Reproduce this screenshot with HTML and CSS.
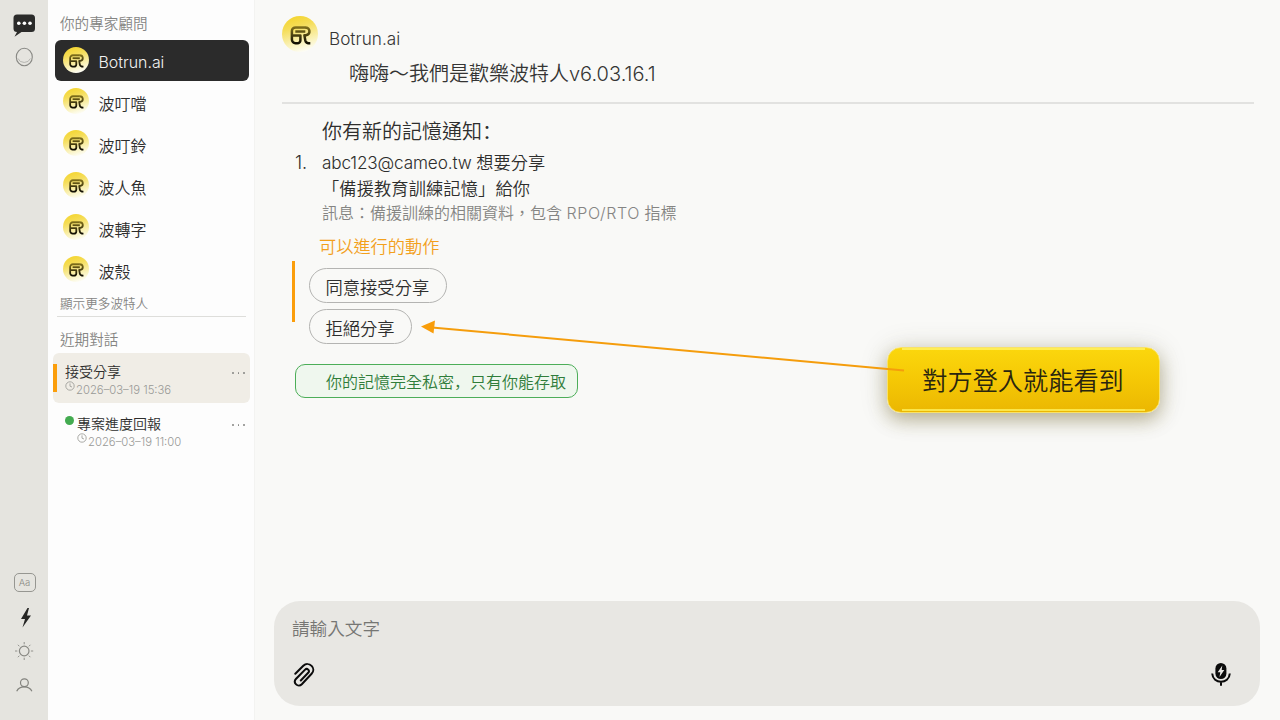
FILE: index.html
```html
<!DOCTYPE html>
<html lang="zh-Hant">
<head>
<meta charset="utf-8">
<title>Botrun.ai</title>
<link rel="stylesheet" href="styles.css">
</head>
<body>
<svg class="defs" width="0" height="0" aria-hidden="true">
  <defs>
    <linearGradient id="sun" x1="0.3" y1="0" x2="0.6" y2="1">
      <stop offset="0" stop-color="#f4d52f"/>
      <stop offset="0.3" stop-color="#f5dd58"/>
      <stop offset="0.75" stop-color="#faf3bf"/>
      <stop offset="1" stop-color="#fdfdf8"/>
    </linearGradient>
    <linearGradient id="ink" gradientUnits="userSpaceOnUse" x1="0" y1="10" x2="0" y2="28">
      <stop offset="0" stop-color="#85741c"/>
      <stop offset="0.55" stop-color="#453c10"/>
      <stop offset="1" stop-color="#0c0a02"/>
    </linearGradient>
    <symbol id="logo" viewBox="0 0 36 36">
      <circle cx="18" cy="18" r="18" fill="url(#sun)"/>
      <g fill="none" stroke="url(#ink)" stroke-width="2.5" stroke-linejoin="round">
        <path d="M23.300 11.400H13.600a3.700 3.700 0 0 0-3.700 3.700V23.600a3.600 3.600 0 0 0 3.600 3.600h1.900a3 3 0 0 0 3-3V19.600H10"/>
        <path d="M13.300 15.500L23.300 15.600"/>
        <path d="M23 11.400c5.500 0 5.900 6.800 1 7.900H22.400L23.300 24.400C23.700 26.400 24.700 27.300 28.300 27.300"/>
      </g>
    </symbol>
    <symbol id="clock" viewBox="0 0 10 10">
      <circle cx="5" cy="5" r="4.200" fill="none" stroke="#a0a09c" stroke-width="0.900"/>
      <path d="M5 2.400V5.200L7 6" fill="none" stroke="#a0a09c" stroke-width="0.900"/>
    </symbol>
  </defs>
</svg>
<div class="app">
  <nav class="rail">
    <div class="rail-top">
      <svg class="ico-chat" width="24" height="25" viewBox="0 0 24 25"><path d="M5 1.500H19.500a3.500 3.500 0 0 1 3.500 3.500V15.500A3.500 3.500 0 0 1 19.500 19H9.500L2.500 23.800 5 19A3.500 3.500 0 0 1 1.500 15.500V5A3.500 3.500 0 0 1 5 1.500Z" fill="#2b2b2a"/><g fill="#fff"><circle cx="6.800" cy="10.200" r="1.800"/><circle cx="12.400" cy="10.200" r="1.800"/><circle cx="18" cy="10.200" r="1.800"/></g></svg>
      <svg class="ico-ring" width="20" height="20" viewBox="0 0 20 20" fill="none"><ellipse cx="10.300" cy="10" rx="8" ry="8.800" stroke="#888884" stroke-width="1.100"/><path d="M4 11.500a6.600 6 0 0 0 12.400 0" stroke="#b0b0ab" stroke-width="0.900"/></svg>
    </div>
    <div class="rail-bottom">
      <span class="ico-font">Aa</span>
      <svg class="ico-bolt" width="16" height="22" viewBox="0 0 16 22"><path d="M9.500 1L3 12H7L4.500 20.500 13 8.500H9L11 1Z" fill="#262624"/></svg>
      <svg class="ico-sun" width="20" height="20" viewBox="0 0 20 20" fill="none" stroke="#888883"><circle cx="10.200" cy="10" r="4.800" stroke-width="1.200"/><path stroke-width="0.900" d="M10.200 1V3.300M10.200 16.700V19M1 10H3.300M16.900 10H19.200M3.900 3.800L5.400 5.300M14.900 14.700L16.400 16.200M16.400 3.800L14.900 5.300M5.400 14.700L3.900 16.200"/></svg>
      <svg class="ico-user" width="18" height="16" viewBox="0 0 18 16" fill="none" stroke="#82827d" stroke-width="1.200"><circle cx="9.400" cy="5.700" r="3.900"/><path d="M1.700 14.200C4.500 8.500 14 8.500 16.900 14.200"/></svg>
    </div>
  </nav>
  <aside class="sidebar">
    <h2 class="side-title">你的專家顧問</h2>
    <ul class="bots">
      <li class="bot active"><svg class="bot-logo"><use href="#logo"/></svg><span>Botrun.ai</span></li>
      <li class="bot"><svg class="bot-logo"><use href="#logo"/></svg><span>波叮噹</span></li>
      <li class="bot"><svg class="bot-logo"><use href="#logo"/></svg><span>波叮鈴</span></li>
      <li class="bot"><svg class="bot-logo"><use href="#logo"/></svg><span>波人魚</span></li>
      <li class="bot"><svg class="bot-logo"><use href="#logo"/></svg><span>波轉字</span></li>
      <li class="bot"><svg class="bot-logo"><use href="#logo"/></svg><span>波殼</span></li>
    </ul>
    <div class="more">顯示更多波特人</div>
    <h2 class="side-title recent">近期對話</h2>
    <div class="chat selected">
      <div class="chat-body">
        <div class="chat-name">接受分享</div>
        <div class="chat-date"><svg><use href="#clock"/></svg><span>2026–03–19 15:36</span></div>
      </div>
      <div class="dots"><i></i><i></i><i></i></div>
    </div>
    <div class="chat unread">
      <i class="status"></i>
      <div class="chat-body">
        <div class="chat-name">專案進度回報</div>
        <div class="chat-date"><svg><use href="#clock"/></svg><span>2026–03–19 11:00</span></div>
      </div>
      <div class="dots"><i></i><i></i><i></i></div>
    </div>
  </aside>
  <main class="main">
    <header class="head">
      <div class="who"><svg class="head-logo"><use href="#logo"/></svg><span>Botrun.ai</span></div>
      <div class="greeting">嗨嗨～我們是歡樂波特人v6.03.16.1</div>
    </header>
    <section class="notice">
      <h1 class="notice-title">你有新的記憶通知<span class="sc" lang="zh-Hans">：</span></h1>
      <div class="item">
        <span class="num">1.</span>
        <div class="item-body">
          <p><span class="mail">abc123@cameo.tw</span> 想要分享</p>
          <p class="topic">「備援教育訓練記憶」給你</p>
          <p class="msg">訊息：備援訓練的相關資料，包含 <span class="rpo">RPO/RTO</span> 指標</p>
        </div>
      </div>
      <div class="actions-title">可以進行的動作</div>
      <div class="actions">
        <button class="pill">同意接受分享</button>
        <button class="pill">拒絕分享</button>
      </div>
      <div class="private">你的記憶完全私密<span class="sc" lang="zh-Hans">，</span>只有你能存取</div>
    </section>
    <div class="composer">
      <div class="placeholder">請輸入文字</div>
      <div class="tools">
        <svg width="24" height="26" viewBox="0 0 24 26" fill="none" stroke="#0b0b0b" stroke-width="2" stroke-linecap="round" stroke-linejoin="round"><path d="M3.300 11.800L11.300 3.800C13.700 1.500 17.300 1.600 19.600 3.900S21.800 9.500 19.600 11.800L9.800 22.300C8.100 24 5.700 24 4.100 22.400S2.500 18.500 4.100 16.800L13.100 7.600C14 6.700 15.300 6.700 16.200 7.600S17 9.900 16.200 10.800L8.800 18.500"/></svg>
        <svg width="22" height="26" viewBox="0 0 22 26"><rect x="5.400" y="1" width="11" height="16" rx="5.500" fill="#0b0b0b"/><path d="M12.300 3.400L7.700 10.200H10.300L9.500 14.900 14.300 8.100H11.700Z" fill="#e9e8e4"/><path d="M2.200 11.500C2.800 22.500 19.200 22.500 19.800 11.500M11 19.700V23.700" fill="none" stroke="#0b0b0b" stroke-width="2"/></svg>
      </div>
    </div>
  </main>
  <div class="callout">對方登入就能看到</div>
  <svg class="arrow" width="490" height="56" viewBox="0 0 490 56"><path d="M12 7.500L484 50.500" stroke="#f59d0c" stroke-width="2"/><path d="M1 6.500L15 .5 13.500 13.500Z" fill="#f99d0a"/></svg>
</div>
</body>
</html>
```
FILE: styles.css
```css
* { box-sizing: border-box; margin: 0; padding: 0; }
body {
  width: 1280px; height: 720px; overflow: hidden;
  background: #f9f9f7; color: #2e2e2d;
  font-family: Inter, "Noto Sans CJK TC", sans-serif;
  font-weight: 350;
}
ul { list-style: none; }
svg { display: block; flex: none; }
.defs { position: absolute; }
.app { position: relative; display: flex; width: 1280px; height: 720px; }
.sc { font-family: "Noto Sans CJK SC", sans-serif; line-height: 1; }

.rail {
  width: 48px; background: #e5e4df;
  display: flex; flex-direction: column; justify-content: space-between; align-items: center;
  padding: 13px 0 27px;
}
.rail-top, .rail-bottom { display: flex; flex-direction: column; align-items: center; }
.ico-ring { margin-top: 9px; }
.ico-font {
  width: 22px; height: 19px; border: 1.5px solid #969691; border-radius: 5px; margin-left: 1px;
  font-size: 9.500px; line-height: 17px; text-align: center; color: #8a8a85;
}
.ico-bolt { margin: 15px 0 0 3px; }
.ico-sun { margin-top: 12px; }
.ico-user { margin-top: 16px; }

.sidebar {
  width: 207px; background: #fdfdfd; padding-top: 14px;
  border-right: 1px solid #f3f3f1;
}
.side-title {
  font-size: 14.600px; font-weight: 350; line-height: 20px; color: #858583; padding-left: 12px;
}
.bots { padding: 6px 5px 0 6.500px; }
.bot {
  height: 42px; display: flex; align-items: flex-start; gap: 10px;
  padding-left: 8px; font-size: 16px; line-height: 42px;
}
.bot span { padding-top: 1px; }
.bot-logo { width: 26px; height: 26px; margin-top: 6px; }
.bot.active {
  height: 41px; margin-bottom: 1px; background: #2b2b2b; border-radius: 6px;
  color: #f2f2f2; font-size: 15.900px;
}
.bot.active span { padding-top: 2px; }
.bot.active .bot-logo { margin-top: 7px; }
.more {
  font-size: 12.600px; line-height: 20px; color: #858583;
  margin: 2px 8px 0 9px; padding-left: 3px; height: 23px; border-bottom: 1px solid #dededb;
}
.recent { padding-top: 13px; height: 36px; }
.chat {
  height: 50px; margin: 0 4px 0 5px; padding: 9px 4px 0 12px;
  display: flex; align-items: flex-start; justify-content: space-between; border-radius: 6px;
}
.chat.selected { position: relative; background: #f0ede6; }
.chat.selected::before {
  content: ""; position: absolute; left: 0; top: 11px; width: 4px; height: 28px; background: #fb9e0b;
}
.chat.unread { margin-top: 2px; }
.status { width: 9px; height: 9px; border-radius: 50%; background: #43ab50; margin: 2px 3px 0 0; }
.chat-body { flex: 1; }
.chat-name { font-size: 14px; line-height: 19px; }
.chat-date {
  display: flex; gap: 1px; font-size: 11.300px; line-height: 18px; color: #999996; white-space: nowrap;
}
.chat-date svg { width: 10px; height: 10px; }
.dots { display: flex; gap: 4px; padding: 10px 1px 0 0; }
.dots i { width: 1.600px; height: 1.600px; background: #858582; border-radius: 1px; }

.main { flex: 1; padding: 16px 20px 14px 19px; display: flex; flex-direction: column; }
.head { height: 88px; margin: 0 6px 0 8px; border-bottom: 2px solid #e2e2e0; }
.who { display: flex; align-items: center; gap: 11px; height: 36px; font-size: 17.200px; color: #353534; }
.who span { padding-top: 8px; }
.head-logo { width: 36px; height: 36px; }
.greeting { padding: 7px 0 0 67px; font-size: 20px; line-height: 30px; color: #353534; }
.notice { flex: 1; padding: 14px 0 0 18px; display: flex; flex-direction: column; align-items: flex-start; }
.notice-title { font-size: 20px; line-height: 28px; height: 28px; font-weight: 350; padding-left: 30px; }
.item { display: flex; padding: 4px 0 0 3px; font-size: 17.200px; line-height: 26px; }
.num { width: 27px; font-size: 18px; }
.item-body p { height: 25.500px; line-height: 25px; }
.mail { letter-spacing: -0.160px; }
.rpo { letter-spacing: 0.600px; }
.topic { letter-spacing: 0.150px; }
.item-body .msg { font-size: 16px; color: #858583; }
.actions-title { font-size: 17.200px; line-height: 24px; color: #f3a01c; padding-left: 27px; margin-top: 8.500px; }
.actions {
  position: relative; margin-top: 9px; padding-left: 17px;
  display: flex; flex-direction: column; align-items: flex-start; gap: 6px;
}
.actions::before {
  content: ""; position: absolute; left: 0; top: -7px; width: 3px; height: 61px; background: #fb9e0b;
}
.pill {
  height: 35px; padding: 4px 16.500px 0 15.500px; border: 1px solid #b4b4b2; border-radius: 18px;
  background: none; color: #2e2e2d; font: inherit; font-size: 17.300px; line-height: 29px;
}
.private {
  margin: 20px 0 0 3px; height: 34px; width: 283px; padding: 2px 0 0 30px; white-space: nowrap;
  border: 1.500px solid #4cae58; border-radius: 10px; background: #eff7ee;
  color: #2f7d3a; font-size: 16px; line-height: 31px;
}
.composer {
  height: 105px; border-radius: 26px; background: #e8e7e3;
  display: flex; flex-direction: column; justify-content: space-between;
  padding: 16px 28px 18px 18px;
}
.placeholder { font-size: 17.600px; line-height: 24px; color: #767673; }
.tools { display: flex; justify-content: space-between; }

.callout {
  position: absolute; left: 887px; top: 347px; width: 273px; height: 66px; border-radius: 14px;
  border: 1px solid #f8e267;
  background:
    linear-gradient(#ffee55, #ffee55) 14px 0 / 243px 2px no-repeat,
    linear-gradient(#fbe64a, #fbe64a) 14px 61px / 243px 2px no-repeat,
    linear-gradient(#fbd70d, #f5c805 50%, #ebb702);
  box-shadow: 0 7px 18px rgba(105, 90, 20, .36), 0 2px 28px rgba(80, 75, 50, .18);
  font-size: 25.200px; line-height: 66px; text-align: center; text-indent: -1px; color: #29250f;
}
.arrow { position: absolute; left: 420px; top: 320px; }
```
